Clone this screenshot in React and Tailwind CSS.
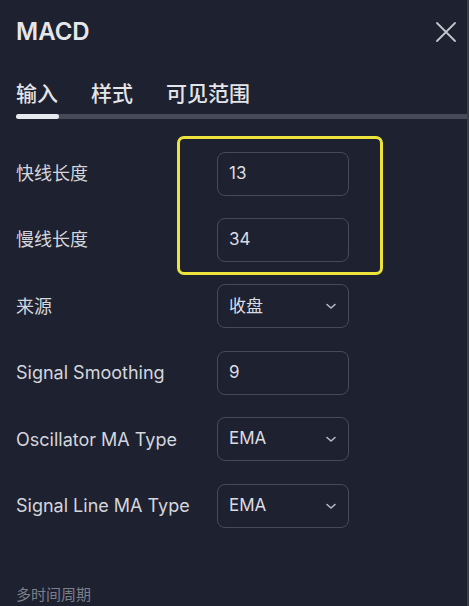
import React from "react";

const Chevron = () => (
  <svg width="14" height="14" viewBox="0 0 14 14" fill="none" className="text-[#b8bbc4]">
    <path d="M3 5.5 L7 9 L11 5.5" stroke="currentColor" strokeWidth="1.6" strokeLinecap="round" strokeLinejoin="round" />
  </svg>
);

const Field = ({ value, select }) => (
  <div className="w-[132px] h-[44px] rounded-[8px] border border-[#474b58] flex items-center justify-between pl-[11px] pr-[10px] text-[17px] text-[#dcdde2]">
    <span>{value}</span>
    {select && <Chevron />}
  </div>
);

const Row = ({ label, value, select }) => (
  <div className="flex items-center h-[44px]">
    <div className="w-[201px] text-[18px] text-[#d4d6dc]">{label}</div>
    <Field value={value} select={select} />
  </div>
);

export default function App() {
  return (
    <div
      className="w-[469px] h-[606px] bg-[#1e2130] relative overflow-hidden flex"
      style={{ fontFamily: '"Inter", "Noto Sans CJK SC", sans-serif' }}
    >
      <div className="flex-1 flex flex-col">
        <div className="flex items-center justify-between h-[44px] mt-[11px] pl-[16px] pr-[10px]">
          <div className="text-[24px] font-semibold text-[#e6e7ea]">MACD</div>
          <svg width="22" height="22" viewBox="0 0 22 22" fill="none" className="text-[#c4c6cc]">
            <path d="M2 2 L20 20 M20 2 L2 20" stroke="currentColor" strokeWidth="1.8" strokeLinecap="round" />
          </svg>
        </div>
        <div className="flex items-center gap-[33px] pl-[16px] mt-[26px] text-[21px] font-medium text-[#e4e5e9] h-[28px]">
          <span>输入</span>
          <span>样式</span>
          <span>可见范围</span>
        </div>
        <div className="ml-[16px] mt-[6px] h-[5px] bg-[#474b57] flex rounded-l-full">
          <div className="w-[43px] h-[5px] bg-[#e8e9ee] rounded-full" />
        </div>
        <div className="flex flex-col gap-[22.4px] pl-[16px] mt-[33px]">
          <Row label="快线长度" value="13" />
          <Row label="慢线长度" value="34" />
          <Row label="来源" value="收盘" select />
          <Row label="Signal Smoothing" value="9" />
          <Row label="Oscillator MA Type" value="EMA" select />
          <Row label="Signal Line MA Type" value="EMA" select />
        </div>
        <div className="pl-[16px] mt-[56px] text-[15px] text-[#7b7f8a]">多时间周期</div>
      </div>
      <div className="w-[2px] bg-[#3a3e4a]" />
      <div className="absolute left-[177px] top-[136px] w-[206px] h-[139px] border-[3px] border-[#ece43a] rounded-[7px]" />
    </div>
  );
}
